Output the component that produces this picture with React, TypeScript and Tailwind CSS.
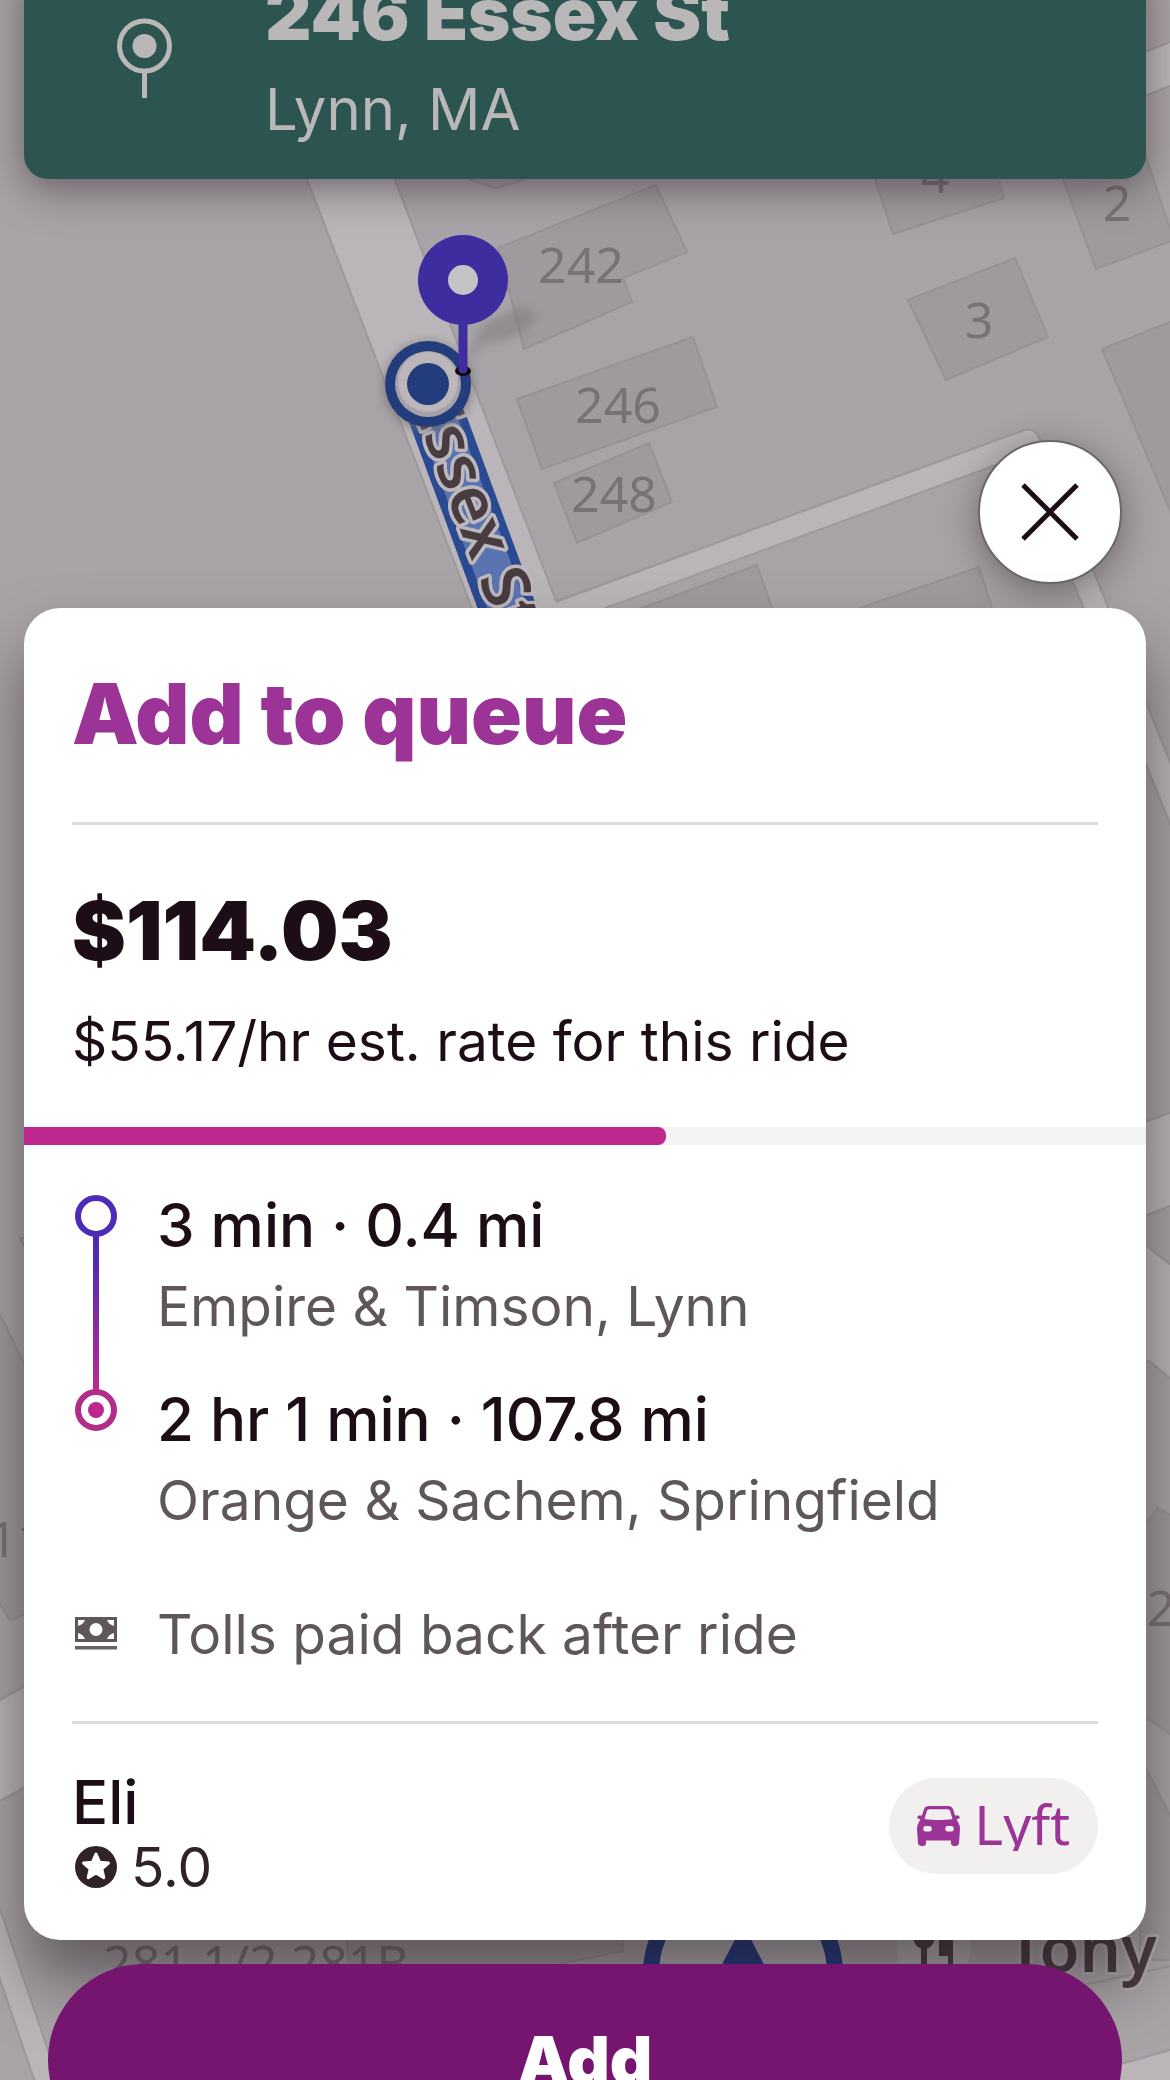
import { useState } from "react";

const stops = [
  { title: "3 min · 0.4 mi", place: "Empire & Timson, Lynn" },
  { title: "2 hr 1 min · 107.8 mi", place: "Orange & Sachem, Springfield" },
];

const buildings = [
  "498,248 656,185 687,252 623,278 632,302 524,349",
  "517,399 693,337 717,407 542,469",
  "554,483 649,443 672,502 577,543",
  "866,150 875,179 893,234 1004,198 990,150",
  "1052,150 1063,179 1096,269 1174,240 1140,140",
  "908,300 1015,258 1048,337 946,380",
  "1102,349 1180,318 1180,534",
  "626,614 757,565 776,620",
  "845,613 979,567 996,620",
  "466,170 470,180 496,188 526,179 530,170",
  "-10,1304 0,1314 30,1376 30,1613 10,1620 -10,1588",
  "1140,1531 1158,1508 1180,1520 1180,1741 1140,1713",
  "1140,1756 1180,1835 1180,1960 1140,1960",
  "345,1925 623,1925 623,1951 530,1970 350,1970",
];

const labels = [
  { text: "242", x: 581, y: 283 },
  { text: "246", x: 618, y: 423 },
  { text: "248", x: 614, y: 512 },
  { text: "4", x: 935, y: 193 },
  { text: "3", x: 979, y: 338 },
  { text: "2", x: 1117, y: 221 },
  { text: "2", x: 1161, y: 1626 },
  { text: "11", x: 17, y: 1557 },
  { text: "281 1/2 281B", x: 256, y: 1981 },
];

function MapBackground() {
  return (
    <svg
      viewBox="0 0 1170 2080"
      preserveAspectRatio="xMidYMin slice"
      className="absolute inset-0 h-full w-full"
      aria-hidden="true"
    >
      <defs>
        <filter id="soft" x="-50%" y="-50%" width="200%" height="200%">
          <feGaussianBlur stdDeviation="5" />
        </filter>
      </defs>
      <rect width="1170" height="2080" fill="#a8a3a6" />

      {/* roads */}
      <g fill="#b9b5b8" stroke="#9d989b" strokeWidth="2">
        <path d="M238 0 L472 608 L500 680 L590 680 L555 598 L326 0 Z" />
        <path d="M1130 58 L1180 38 L1180 82 L1130 102 Z" />
        <path d="M1140 1124 L1180 1109 L1180 1202 L1140 1218 Z" />
        <path d="M1140 1241 L1180 1272 L1180 1386 L1149 1361 L1140 1366 Z" />
        <path d="M-10 1706 L30 1683 L30 1785 L-10 1806 Z" />
        <path d="M-10 1880 L60 2085 L36 2085 L-10 1950 Z" />
        <path d="M1110 2067 L1180 2047 L1180 2090 L1110 2090 Z" />
      </g>
      <path d="M560 612 L1028 441 L1096 608 L1200 868" fill="none" stroke="#9d989b" strokeWidth="25" strokeLinejoin="round" />
      <path d="M545 618 L1028 441 L1096 608 L1200 868" fill="none" stroke="#b9b5b8" strokeWidth="21" strokeLinejoin="round" />
      <path d="M1060 1990 L1180 1964" stroke="#989396" strokeWidth="2" />
      <path d="M20 1239 L30 1235 M20 1239 L30 1256" stroke="#928d90" strokeWidth="2" />

      <g fill="#9f9a9d" stroke="#979295" strokeWidth="2">
        {buildings.map((points) => (
          <polygon key={points} points={points} />
        ))}
      </g>

      <g fill="#7a7175" fontFamily="Noto Sans, sans-serif" fontSize="50" textAnchor="middle">
        {labels.map((label) => (
          <text key={`${label.x}-${label.y}`} x={label.x} y={label.y}>
            {label.text}
          </text>
        ))}
      </g>

      {/* active route */}
      <path d="M430 398 L518 637" stroke="#2a4a92" strokeWidth="56" />
      <path d="M430 398 L518 637" stroke="#5a74b2" strokeWidth="38" />
      <text
        transform="translate(410 400) rotate(69)"
        fontFamily="Noto Sans, sans-serif"
        fontSize="65"
        fontWeight="600"
        fill="#483c41"
        stroke="#bcb8bb"
        strokeWidth="7"
        strokeLinejoin="round"
        paintOrder="stroke"
      >
        Essex St
      </text>

      {/* current position */}
      <circle cx="428" cy="386" r="45" fill="#6f6a6d" opacity="0.6" filter="url(#soft)" />
      <circle cx="428" cy="384" r="43" fill="#233c7c" />
      <circle cx="428" cy="384" r="33" fill="#a5a1a6" />
      <circle cx="428" cy="382" r="30" fill="#bab6ba" />
      <circle cx="428" cy="384" r="21" fill="#233c7c" />

      {/* pickup pin */}
      <path d="M466 370 L482 344 C 500 344 530 335 536 315 C 530 300 500 310 478 332 Z" fill="#777275" opacity="0.45" filter="url(#soft)" />
      <ellipse cx="463" cy="371" rx="8" ry="5" fill="#0c0710" />
      <path d="M463 300 L463 369" stroke="#3f2c9f" strokeWidth="9" strokeLinecap="round" />
      <circle cx="463" cy="280" r="45" fill="#3f2c9f" />
      <circle cx="463" cy="280" r="15" fill="#c6c3c6" />

      {/* vehicle marker */}
      <circle cx="743" cy="1973" r="92" fill="#b3afb2" stroke="#213a7e" strokeWidth="16" />
      <path d="M743 1924 L800 2034 L743 2010 L686 2034 Z" fill="#213a7e" />

      {/* restaurant */}
      <circle cx="934" cy="1948" r="37" fill="#b3afb2" />
      <g fill="#483c41">
        <ellipse cx="924" cy="1936" rx="11" ry="13" />
        <rect x="921" y="1940" width="6" height="36" />
        <path d="M939 1920 H953 V1970 H948 V1956 H939 Z" />
      </g>
      <text
        x="1007"
        y="1972"
        fontFamily="Noto Sans, sans-serif"
        fontSize="65"
        fontWeight="600"
        fill="#483c41"
        stroke="#b0acaf"
        strokeWidth="6"
        strokeLinejoin="round"
        paintOrder="stroke"
      >
        Tony
      </text>
    </svg>
  );
}

function CarIcon() {
  return (
    <svg viewBox="0 0 43 40" className="h-10 w-[43px]" aria-hidden="true">
      <path
        fill="#9c3498"
        fillRule="evenodd"
        d="M12 0 H31 C34 0 35.500 1.500 36.300 4 L38 9.500 H41 C43 9.500 43 13 41 13 H39.500 L41.500 17 C42.600 19 43 21 43 23 L42 37 C41.800 39 40.500 40 38.500 40 H37 C35 40 34 39 34 37 V34.500 H9 V37 C9 39 8 40 6 40 H4.500 C2.500 40 1.200 39 1 37 L0 23 C0 21 0.400 19 1.500 17 L3.500 13 H2 C0 13 0 9.500 2 9.500 H5 L6.700 4 C7.500 1.500 9 0 12 0 Z M12.500 3.200 C11 3.200 10.200 4 9.700 5.500 L7.500 13 C16 14.300 27 14.300 35.500 13 L33.300 5.500 C32.800 4 32 3.200 30.500 3.200 Z M8.500 20 C5.500 20 5.500 25.500 8.500 25.500 H12.500 C15.500 25.500 15.500 20 12.500 20 Z M30.500 20 C27.500 20 27.500 25.500 30.500 25.500 H34.500 C37.500 25.500 37.500 20 34.500 20 Z"
      />
    </svg>
  );
}

function CashIcon() {
  return (
    <svg viewBox="0 0 42 33" className="mt-6 h-[33px] w-[42px]" aria-hidden="true">
      <rect width="42" height="25" fill="#5f565b" />
      <g fill="#fff">
        <circle cx="21" cy="12.500" r="6.500" />
        <path d="M3 3 H10 C9 6 6.500 8 3 9 Z M39 3 H32 C33 6 35.500 8 39 9 Z M3 22 H10 C9 19 6.500 17 3 16 Z M39 22 H32 C33 19 35.500 17 39 16 Z" />
      </g>
      <rect y="29" width="42" height="3.500" fill="#6a6166" />
    </svg>
  );
}

function StarIcon() {
  return (
    <svg viewBox="0 0 42 42" className="h-[42px] w-[42px]" aria-hidden="true">
      <circle cx="21" cy="21" r="21" fill="#2f2329" />
      <path
        fill="#fff"
        stroke="#fff"
        strokeWidth="3"
        strokeLinejoin="round"
        d="M21 8 L24.600 16.200 L33.500 17 L26.800 22.900 L28.800 31.700 L21 27 L13.200 31.700 L15.200 22.900 L8.500 17 L17.400 16.200 Z"
      />
    </svg>
  );
}

function RouteLine() {
  return (
    <svg viewBox="0 0 42 236" className="mt-[10px] h-[236px] w-[42px]" aria-hidden="true">
      <defs>
        <linearGradient id="route" x1="0" y1="0" x2="0" y2="1">
          <stop offset="0" stopColor="#4c2bb8" />
          <stop offset="0.150" stopColor="#502bb5" />
          <stop offset="1" stopColor="#bd2a8c" />
        </linearGradient>
      </defs>
      <rect x="18" y="40" width="6" height="156" fill="url(#route)" />
      <circle cx="21" cy="21" r="18" fill="none" stroke="#4c2bb8" strokeWidth="6" />
      <circle cx="21" cy="215" r="18" fill="none" stroke="#b22d88" strokeWidth="6" />
      <circle cx="21" cy="215" r="8" fill="#bf268c" />
    </svg>
  );
}

function App() {
  const [open, setOpen] = useState(true);

  return (
    <div className="relative h-screen overflow-hidden bg-[#a8a3a6] font-['Inter',sans-serif] text-[#1c0d17]">
      <MapBackground />

      <div className="relative flex flex-col">
        {/* Destination banner */}
        <header className="mx-6 -mt-9 flex rounded-b-3xl bg-[#2c5552] pb-[31px] pl-[93px] text-[#bab7b9] shadow-[0_10px_40px_rgba(40,30,36,0.5)]">
          <svg viewBox="0 0 55 80" className="mt-[54px] mr-[93px] h-20 w-[55px]" fill="none" aria-hidden="true">
            <circle cx="27.500" cy="28" r="25" stroke="currentColor" strokeWidth="5" />
            <circle cx="27.500" cy="28" r="12" fill="currentColor" />
            <path d="M27.500 54 V80" stroke="currentColor" strokeWidth="5" />
          </svg>
          <div>
            <h2 className="text-[72px] leading-[100px] font-black">246 Essex St</h2>
            <p className="mt-1.5 text-[58px] leading-[78px]">Lynn, MA</p>
          </div>
        </header>

        {open && (
          <>
            <button
              type="button"
              aria-label="Close"
              onClick={() => setOpen(false)}
              className="mt-[261px] mr-12 flex size-36 items-center justify-center self-end rounded-full border-2 border-[#6d666a] bg-white shadow-[0_8px_36px_rgba(40,30,36,0.45)]"
            >
              <svg viewBox="0 0 58 58" className="size-[58px]" stroke="#1c0d17" strokeWidth="5" aria-hidden="true">
                <path d="M2 2 L56 56 M56 2 L2 56" />
              </svg>
            </button>

            {/* Ride card */}
            <section className="relative mx-6 mt-6 rounded-[36px] bg-white pb-[42px] shadow-[0_40px_64px_rgba(30,20,26,0.5)]">
              <div className="px-12 pt-14 pb-[46px]">
                <h1 className="text-[84px] leading-[100px] font-black text-[#9c3498]">Add to queue</h1>
                <hr className="mt-[58px] border-t-[3px] border-[#dcdbd8]" />
                <p className="mt-14 text-[81px] leading-[100px] font-black">$114.03</p>
                <p className="mt-5 text-[55px] leading-20">$55.17/hr est. rate for this ride</p>
              </div>

              <div className="h-[18px] bg-[#f4f3f4]">
                <div className="h-full w-[57.2%] rounded-r-lg bg-[#be278d]" />
              </div>

              <div className="px-12 pt-10">
                <div className="flex gap-10 pl-[3px]">
                  <RouteLine />
                  <ul className="flex flex-col gap-8">
                    {stops.map((stop) => (
                      <li key={stop.title}>
                        <p className="text-[60px] leading-20 font-medium">{stop.title}</p>
                        <p className="text-[55px] leading-[82px] text-[#5f565b]">{stop.place}</p>
                      </li>
                    ))}
                  </ul>
                </div>

                <div className="mt-[52px] flex gap-10 pl-[3px]">
                  <CashIcon />
                  <p className="text-[55px] leading-[82px] text-[#5f565b]">Tolls paid back after ride</p>
                </div>

                <hr className="mt-[46px] border-t-[3px] border-[#dcdbdc]" />

                <div className="mt-11 flex items-start justify-between">
                  <div>
                    <p className="text-[60px] leading-[68px] font-medium">Eli</p>
                    <div className="flex items-center gap-3.5 pl-[3px] text-[#2f2329]">
                      <StarIcon />
                      <span className="text-[55px] leading-[62px]">5.0</span>
                    </div>
                  </div>
                  <div className="mt-[10px] flex h-24 items-center gap-3.5 rounded-full bg-[#f1f0ee] px-7 text-[#9c3498]">
                    <CarIcon />
                    <span className="h-[50px] overflow-hidden font-['Noto_Sans',sans-serif] text-[55px] leading-[46px]">Lyft</span>
                  </div>
                </div>
              </div>
            </section>

            <button
              type="button"
              className="relative mx-12 mt-6 h-48 rounded-full bg-[#76156f] text-[66px] leading-none font-black text-white"
            >
              Add
            </button>
          </>
        )}
      </div>
    </div>
  );
}

export default App;
